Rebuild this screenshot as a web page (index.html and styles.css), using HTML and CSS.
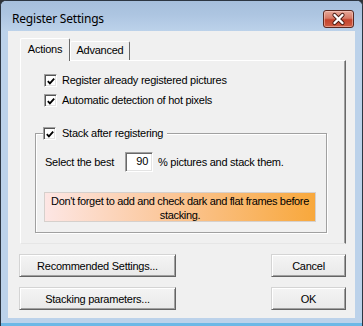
FILE: index.html
```html
<!DOCTYPE html>
<html>
<head>
<meta charset="utf-8">
<link rel="stylesheet" href="styles.css">
</head>
<body>
<div class="window">
  <div class="titlebar">
    <span class="title">Register Settings</span>
    <span class="close">
      <svg width="29" height="16" viewBox="0 0 29 16">
        <path d="M10.5 4 L18.5 12 M18.5 4 L10.5 12" stroke="#4a1c14" stroke-width="4.2" stroke-linecap="round" fill="none"/>
        <path d="M10.5 4 L18.5 12 M18.5 4 L10.5 12" stroke="#ffffff" stroke-width="2.4" stroke-linecap="round" fill="none"/>
      </svg>
    </span>
  </div>
  <div class="client">
    <div class="tabs">
      <div class="tab active">Actions</div>
      <div class="tab">Advanced</div>
    </div>
    <div class="pane">
      <div class="check">
        <span class="box"><svg width="11" height="11" viewBox="0 0 11 11"><polyline points="2,5 4.3,7.5 9,2.3" stroke="#000" stroke-width="2" fill="none"/></svg></span>
        <span>Register already registered pictures</span>
      </div>
      <div class="check second">
        <span class="box"><svg width="11" height="11" viewBox="0 0 11 11"><polyline points="2,5 4.3,7.5 9,2.3" stroke="#000" stroke-width="2" fill="none"/></svg></span>
        <span>Automatic detection of hot pixels</span>
      </div>
      <fieldset class="group">
        <legend class="check legend">
          <span class="box"><svg width="11" height="11" viewBox="0 0 11 11"><polyline points="2,5 4.3,7.5 9,2.3" stroke="#000" stroke-width="2" fill="none"/></svg></span>
          <span>Stack after registering</span>
        </legend>
        <div class="select-row">
          <span>Select the best</span>
          <span class="num">90</span>
          <span>% pictures and stack them.</span>
        </div>
        <div class="note">Don't forget to add and check dark and flat frames before<br>stacking.</div>
      </fieldset>
    </div>
    <div class="buttons">
      <div class="btn-row">
        <button class="btn wide">Recommended Settings...</button>
        <button class="btn">Cancel</button>
      </div>
      <div class="btn-row">
        <button class="btn wide">Stacking parameters...</button>
        <button class="btn">OK</button>
      </div>
    </div>
  </div>
  <div class="bottom"></div>
</div>
</body>
</html>
```

FILE: styles.css
```css
* { box-sizing: border-box; }

body {
  margin: 0;
  background: #2f3338;
  font-family: "Liberation Sans", Arial, sans-serif;
  font-size: 11px;
  letter-spacing: -0.25px;
  color: #000;
}

.window {
  width: 363px;
  height: 326px;
  display: flex;
  flex-direction: column;
  background: #bcd2ea;
  border: 1px solid #2c3642;
  border-bottom: none;
  border-radius: 6px 6px 0 0;
  overflow: hidden;
}

.titlebar {
  height: 30px;
  flex: none;
  display: flex;
  justify-content: space-between;
  align-items: flex-start;
  padding: 0 8px 0 11px;
  background: linear-gradient(#a6bfdc 0%, #adc5e1 45%, #bcd2ea 100%);
}

.title {
  font-family: "Noto Sans", "Open Sans", sans-serif;
  font-size: 12px;
  line-height: 16px;
  padding-top: 10px;
  color: #000;
  letter-spacing: -0.2px;
}

.close {
  margin-top: 9px;
  width: 31px;
  height: 18px;
  display: flex;
  align-items: center;
  justify-content: center;
  border: 1px solid #5a2820;
  border-radius: 3px;
  background: linear-gradient(#e6a899 0%, #d77a66 45%, #c4432c 55%, #cf5d43 100%);
  box-shadow: inset 0 0 0 1px rgba(255, 220, 210, 0.45);
}

.client {
  flex: 1;
  margin: 0 7px;
  background: #f0f0f0;
  padding: 7px 9px 0 11px;
  display: flex;
  flex-direction: column;
}

.tabs {
  height: 22px;
  display: flex;
  align-items: flex-end;
  padding-left: 1px;
}

.tab {
  width: 60px;
  height: 19px;
  line-height: 17px;
  text-align: center;
  background: #f0f0f0;
  border-top: 1px solid #ffffff;
  border-left: 1px solid #ffffff;
  border-right: 1px solid #696969;
  border-radius: 2px 2px 0 0;
}

.tab.active {
  width: 50px;
  height: 23px;
  line-height: 20px;
  margin-bottom: -1px;
  position: relative;
  z-index: 1;
}

.pane {
  margin-left: 1px;
  height: 184px;
  border-top: 1px solid #ffffff;
  border-left: 1px solid #ffffff;
  border-right: 1px solid #696969;
  border-bottom: 1px solid #e6e6e6;
  box-shadow: inset -1px 0 0 #a0a0a0;
  padding: 13px 0 0 14px;
}

.check {
  display: flex;
  align-items: center;
  gap: 5px;
  height: 13px;
  line-height: 13px;
  margin-left: 9px;
}

.check.second {
  margin-top: 7px;
}

.box {
  width: 13px;
  height: 13px;
  flex: none;
  background: #fff;
  border: 1px solid;
  border-color: #a0a0a0 #ffffff #ffffff #a0a0a0;
  box-shadow: inset 1px 1px 0 #555555, inset -1px -1px 0 #e3e3e3;
  display: flex;
  align-items: center;
  justify-content: center;
}

.box svg {
  display: block;
  margin: 1px 0 0 1px;
}

.group {
  margin: 20px 0 0 0;
  width: 292px;
  height: 106px;
  border: 1px solid #a0a0a0;
  box-shadow: 1px 1px 0 #ffffff, inset 1px 1px 0 #ffffff;
  padding: 12px 0 0 7px;
  min-width: 0;
}

.legend {
  margin-left: 0;
  padding: 0 4px 0 0;
  gap: 6px;
  background: #f0f0f0;
}

.select-row {
  display: flex;
  align-items: center;
  height: 20px;
  margin-left: 2px;
}

.num {
  width: 28px;
  height: 20px;
  margin: 0 5px 0 11px;
  background: #fff;
  border: 1px solid;
  border-color: #a0a0a0 #ffffff #ffffff #a0a0a0;
  box-shadow: inset 1px 1px 0 #696969, inset -1px -1px 0 #e3e3e3;
  text-align: right;
  padding: 0 4px 0 0;
  line-height: 16px;
}

.note {
  margin: 20px 0 0 1px;
  width: 272px;
  height: 30px;
  padding-top: 1px;
  line-height: 14px;
  text-align: center;
  white-space: nowrap;
  letter-spacing: -0.35px;
  border: 1px solid #d6d0cc;
  background: linear-gradient(90deg, #fde6e4 0%, #fbc79a 45%, #f8a83c 100%);
}

.buttons {
  margin-top: 10px;
  display: flex;
  flex-direction: column;
  gap: 10px;
}

.btn-row {
  display: flex;
  justify-content: space-between;
}

.btn {
  width: 75px;
  height: 23px;
  font-family: "Liberation Sans", Arial, sans-serif;
  font-size: 11px;
  letter-spacing: -0.25px;
  color: #000;
  padding: 0;
  background: linear-gradient(#f4f4f4, #e9e9e9);
  border: 1px solid;
  border-color: #d4d4d4 #646464 #646464 #d4d4d4;
  box-shadow: inset 1px 1px 0 #ffffff, inset -1px -1px 0 #a0a0a0;
  border-radius: 0;
}

.btn.wide {
  width: 157px;
}

.bottom {
  height: 8px;
  flex: none;
  border-bottom: 3px solid #6db8e6;
}
```
